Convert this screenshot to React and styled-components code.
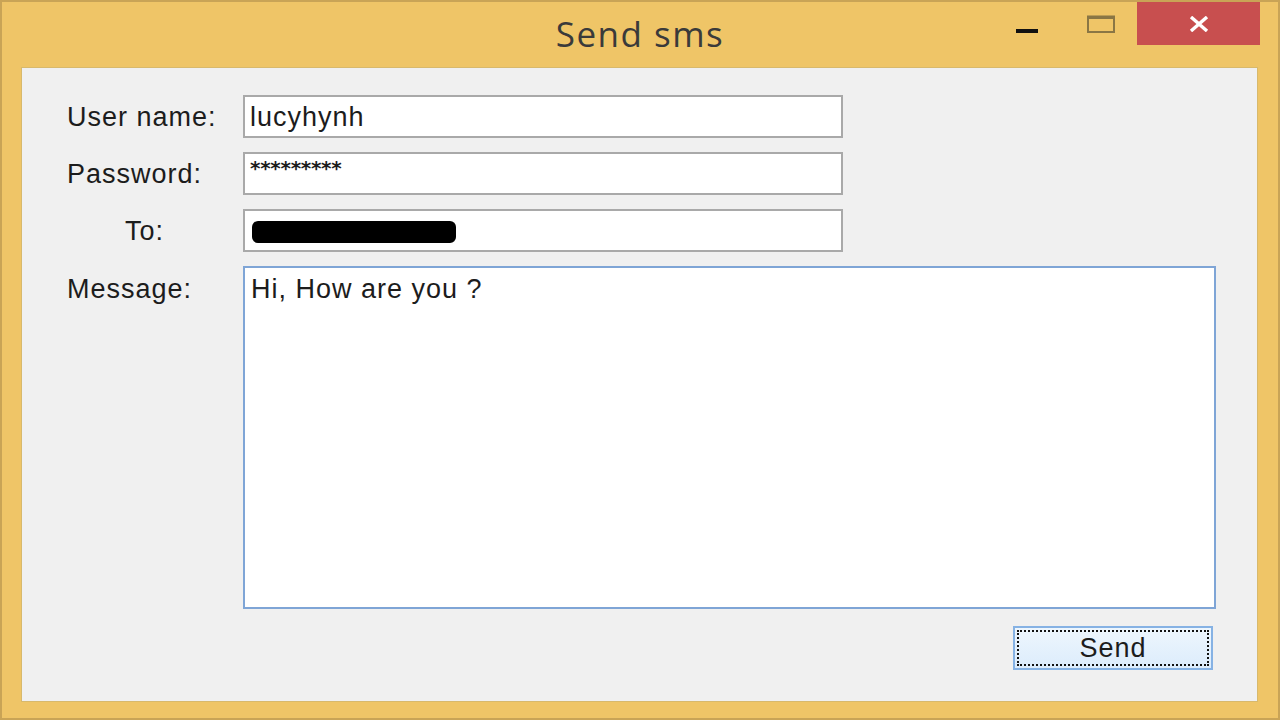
import React from "react";
import styled, { createGlobalStyle } from "styled-components";

const Global = createGlobalStyle`
  html, body { margin: 0; padding: 0; }
  body {
    width: 1280px;
    height: 720px;
    overflow: hidden;
    background: #efc567;
    font-family: "Liberation Sans", Arial, sans-serif;
  }
`;

const Window = styled.div`
  box-sizing: border-box;
  width: 1280px;
  height: 720px;
  display: flex;
  flex-direction: column;
  background: #efc567;
  border: 2px solid #c9a456;
`;

const TitleBar = styled.div`
  height: 65px;
  flex: none;
  display: grid;
  grid-template-columns: 1fr auto 1fr;
  align-items: center;
`;

const Title = styled.div`
  grid-column: 2;
  font-family: "Open Sans", "Noto Sans", sans-serif;
  font-size: 35px;
  letter-spacing: 1.5px;
  color: #3a3a3a;
  padding-bottom: 2px;
`;

const Controls = styled.div`
  grid-column: 3;
  justify-self: end;
  align-self: start;
  display: flex;
  margin-right: 18px;
`;

const CtrlButton = styled.div`
  width: ${(p) => p.$w}px;
  height: 43px;
  margin-left: ${(p) => p.$gap || 0}px;
  display: flex;
  justify-content: center;
  align-items: ${(p) => p.$align || "center"};
  padding-top: ${(p) => p.$pt || 0}px;
  box-sizing: border-box;
  background: ${(p) => p.$bg || "transparent"};
`;

const Client = styled.div`
  flex: 1;
  margin: 0 20px 16px 19px;
  background: #f0f0f0;
  border: 1px solid #d8b96c;
  padding: 27px 0 0 45px;
  display: flex;
  flex-direction: column;
  align-items: flex-start;
`;

const Form = styled.div`
  display: grid;
  grid-template-columns: 176px 973px;
  grid-template-rows: 43px 43px 43px 343px;
  row-gap: 14px;
`;

const Label = styled.label`
  font-size: 27px;
  letter-spacing: 1px;
  line-height: 30px;
  color: #1c1c1c;
  align-self: ${(p) => (p.$top ? "start" : "center")};
  padding-top: ${(p) => (p.$top ? 8 : 0)}px;
  padding-left: ${(p) => p.$indent || 0}px;
`;

const TextBox = styled.div`
  box-sizing: border-box;
  width: ${(p) => p.$w || 600}px;
  height: 100%;
  background: #fff;
  border: 2px solid ${(p) => (p.$focus ? "#7fa5d6" : "#a9a9a9")};
  padding: ${(p) => (p.$multi ? "6px 6px" : "0 5px")};
  display: flex;
  align-items: ${(p) => (p.$multi ? "flex-start" : "center")};
  font-size: 27px;
  letter-spacing: 1px;
  line-height: 30px;
  color: #1c1c1c;
  white-space: pre;
`;

const Masked = styled.span`
  font-family: "DejaVu Sans", sans-serif;
  font-size: 20px;
  letter-spacing: -0.3px;
  font-weight: bold;
  margin-top: -12px;
`;

const Redacted = styled.span`
  display: inline-block;
  width: 204px;
  height: 22px;
  margin-left: 2px;
  margin-top: 2px;
  background: #000;
  border-radius: 6px;
`;

const ButtonRow = styled.div`
  width: 1146px;
  display: flex;
  justify-content: flex-end;
  margin-top: 17px;
`;

const Button = styled.button`
  width: 200px;
  height: 44px;
  box-sizing: border-box;
  border: 2px solid #86b2e4;
  background: linear-gradient(#eef6fd, #dcecfc);
  font-family: "Liberation Sans", Arial, sans-serif;
  font-size: 27px;
  letter-spacing: 1px;
  color: #1c1c1c;
  outline: 2px dotted #111;
  outline-offset: -6px;
  padding: 0;
`;

export default function App() {
  return (
    <>
      <Global />
      <Window>
        <TitleBar>
          <Title>Send sms</Title>
          <Controls>
            <CtrlButton $w={60} $align="flex-start" $pt={27}>
              <svg width="22" height="4" viewBox="0 0 22 4">
                <rect width="22" height="4" fill="#111" />
              </svg>
            </CtrlButton>
            <CtrlButton $w={60} $gap={14}>
              <svg width="28" height="18" viewBox="0 0 28 18">
                <rect x="1" y="1.5" width="26" height="15.5" fill="none" stroke="#8a7644" strokeWidth="2" />
                <rect x="1" y="1" width="26" height="3" fill="#8a7644" />
              </svg>
            </CtrlButton>
            <CtrlButton $w={123} $gap={6} $bg="#c84f4f">
              <svg width="20" height="16" viewBox="0 0 20 16">
                <path d="M2 1 L18 15 M18 1 L2 15" stroke="#fff" strokeWidth="3.4" strokeLinecap="butt" />
              </svg>
            </CtrlButton>
          </Controls>
        </TitleBar>
        <Client>
          <Form>
            <Label>User name:</Label>
            <TextBox>lucyhynh</TextBox>
            <Label>Password:</Label>
            <TextBox>
              <Masked>*********</Masked>
            </TextBox>
            <Label $indent={58}>To:</Label>
            <TextBox>
              <Redacted />
            </TextBox>
            <Label $top>Message:</Label>
            <TextBox $w={973} $multi $focus>
              Hi, How are you ?
            </TextBox>
          </Form>
          <ButtonRow>
            <Button>Send</Button>
          </ButtonRow>
        </Client>
      </Window>
    </>
  );
}
